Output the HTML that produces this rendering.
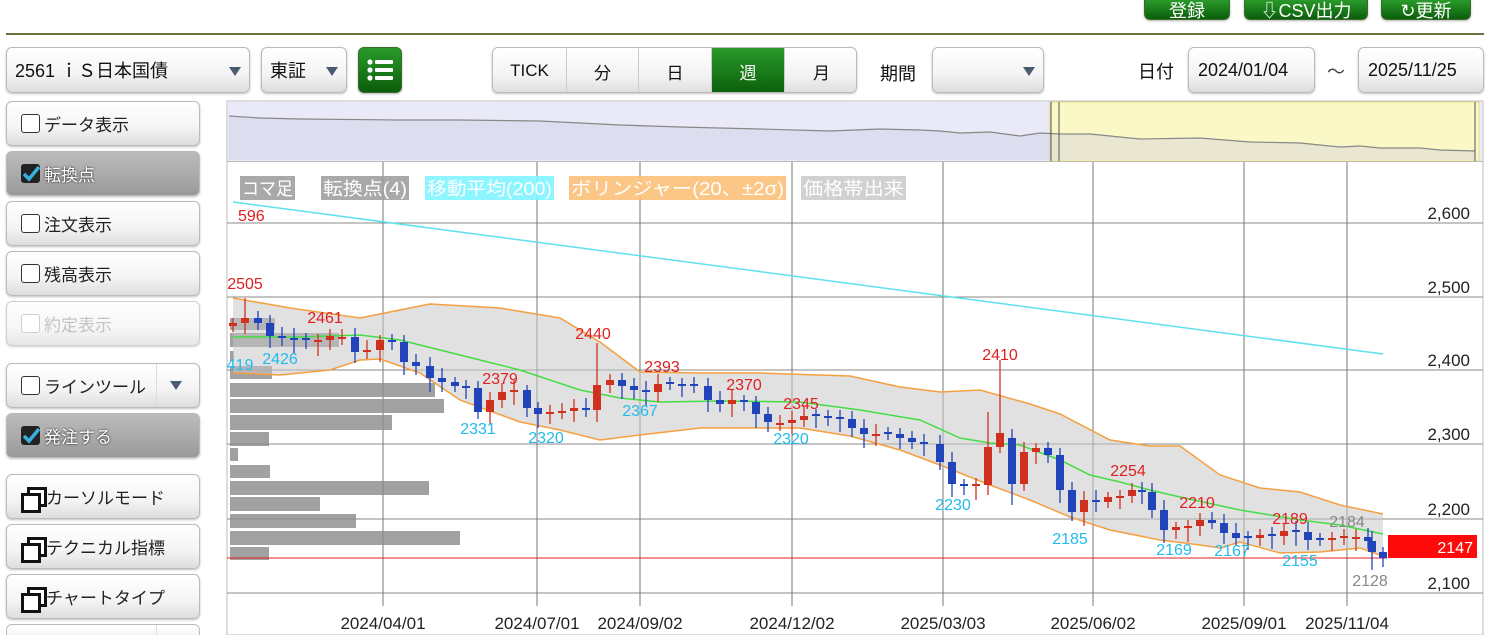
<!DOCTYPE html>
<html><head><meta charset="utf-8">
<style>
*{box-sizing:border-box;margin:0;padding:0}
html,body{width:1496px;height:635px;overflow:hidden}
body{background:#fff;font-family:"Liberation Sans","Noto Sans CJK JP",sans-serif;color:#111;position:relative}
.abs{position:absolute}
.btn{position:absolute;border:1px solid #bbb;border-radius:6px;background:linear-gradient(#fff,#f4f4f4 60%,#ddd);box-shadow:0 1px 2px rgba(0,0,0,.25);font-size:18px;display:flex;align-items:center}
.gbtn{position:absolute;border:1px solid #3a6a2a;border-radius:6px;background:linear-gradient(#2a9a2a,#0b5e0b);color:#fff;box-shadow:0 1px 2px rgba(0,0,0,.3);display:flex;align-items:center;justify-content:center;font-size:18px}
.side{left:6px;width:194px;height:45px;padding-left:14px;font-size:17px;color:#222}
.cb{width:19px;height:19px;border:1.5px solid #333;border-radius:3px;background:#fff;margin-right:4px;flex:none}
.cbc{width:19px;height:19px;border-radius:3px;background:#222;margin-right:4px;flex:none;position:relative}
.dark{background:linear-gradient(#bbb,#a8a8a8 60%,#999);color:#fff;text-shadow:0 0 2px #000}
.win{width:20px;height:20px;position:relative;margin-right:5px;flex:none}
.win:before{content:"";position:absolute;left:6px;top:0;width:14px;height:14px;border:3px solid #111;background:#fff}
.win:after{content:"";position:absolute;left:0;top:6px;width:14px;height:14px;border:3px solid #111;background:#fff}
.tri{width:0;height:0;border-left:6px solid transparent;border-right:6px solid transparent;border-top:9px solid #4a5a70;position:absolute}
.seg{position:absolute;top:47px;height:46px;display:flex;align-items:center;justify-content:center;font-size:17px;border-right:1px solid #ccc;background:linear-gradient(#fff,#f3f3f3 60%,#ddd)}
</style></head><body>
<div class="gbtn" style="left:1144px;top:0;width:86px;height:20px;border-top:none;border-radius:0 0 6px 6px">登録</div>
<div class="gbtn" style="left:1244px;top:0;width:124px;height:20px;border-top:none;border-radius:0 0 6px 6px">⇩CSV出力</div>
<div class="gbtn" style="left:1381px;top:0;width:90px;height:20px;border-top:none;border-radius:0 0 6px 6px">↻更新</div>
<div class="abs" style="left:6px;top:33px;width:1478px;height:2px;background:#6b7240"></div>

<div class="btn" style="left:6px;top:47px;width:244px;height:46px;padding-left:8px">2561 ｉＳ日本国債<div class="tri" style="left:222px;top:19px"></div></div>
<div class="btn" style="left:261px;top:47px;width:86px;height:46px;padding-left:8px">東証<div class="tri" style="left:64px;top:19px"></div></div>
<div class="gbtn" style="left:358px;top:47px;width:44px;height:46px">
<svg width="28" height="24" viewBox="0 0 28 24"><g fill="#fff"><circle cx="4" cy="4" r="2.6"/><circle cx="4" cy="12" r="2.6"/><circle cx="4" cy="20" r="2.6"/><rect x="9" y="2" width="18" height="4" rx="1"/><rect x="9" y="10" width="18" height="4" rx="1"/><rect x="9" y="18" width="18" height="4" rx="1"/></g></svg></div>

<div class="abs" style="left:492px;top:47px;width:365px;height:46px;border:1px solid #bbb;border-radius:6px;overflow:hidden;box-shadow:0 1px 2px rgba(0,0,0,.25)">
<div class="seg" style="left:0;top:0;width:74px">TICK</div>
<div class="seg" style="left:74px;top:0;width:72px">分</div>
<div class="seg" style="left:146px;top:0;width:73px">日</div>
<div class="seg" style="left:219px;top:0;width:73px;background:linear-gradient(#2a9a2a,#0b5e0b);color:#fff">週</div>
<div class="seg" style="left:292px;top:0;width:73px;border:none">月</div>
</div>
<div class="abs" style="left:880px;top:60px;font-size:18px">期間</div>
<div class="btn" style="left:932px;top:47px;width:112px;height:46px"><div class="tri" style="left:90px;top:19px"></div></div>
<div class="abs" style="left:1138px;top:58px;font-size:18px">日付</div>
<div class="btn" style="left:1188px;top:47px;width:127px;height:46px;padding-left:9px">2024/01/04</div>
<div class="abs" style="left:1327px;top:58px;font-size:18px;color:#444">～</div>
<div class="btn" style="left:1358px;top:47px;width:126px;height:46px;padding-left:9px">2025/11/25</div>

<div class="btn side" style="top:101px"><span class="cb"></span>データ表示</div>
<div class="btn side dark" style="top:151px"><span class="cbc"><svg width="19" height="19" style="position:absolute;left:0;top:0"><path d="M3 10 L8 15 L18 3" stroke="#3ab0e0" stroke-width="3.5" fill="none"/></svg></span>転換点</div>
<div class="btn side" style="top:201px"><span class="cb"></span>注文表示</div>
<div class="btn side" style="top:251px"><span class="cb"></span>残高表示</div>
<div class="btn side" style="top:301px;color:#aaa;opacity:.7"><span class="cb" style="border-color:#bbb"></span>約定表示</div>
<div class="btn side" style="top:363px"><span class="cb"></span>ラインツール<div class="abs" style="left:149px;top:0;width:1px;height:43px;background:#ddd"></div><div class="tri" style="left:163px;top:17px"></div></div>
<div class="btn side dark" style="top:413px"><span class="cbc"><svg width="19" height="19" style="position:absolute;left:0;top:0"><path d="M3 10 L8 15 L18 3" stroke="#3ab0e0" stroke-width="3.5" fill="none"/></svg></span>発注する</div>
<div class="btn side" style="top:474px"><span class="win"></span>カーソルモード</div>
<div class="btn side" style="top:524px"><span class="win"></span>テクニカル指標</div>
<div class="btn side" style="top:574px"><span class="win"></span>チャートタイプ</div>
<div class="abs" style="left:6px;top:624px;width:194px;height:11px;border:1px solid #bbb;border-bottom:none;border-radius:6px 6px 0 0;background:linear-gradient(#fff,#f6f6f6)"><div class="abs" style="left:149px;top:0;width:1px;height:10px;background:#ddd"></div></div>

<svg id="ch" class="abs" style="left:0;top:0" width="1496" height="635" font-family="Liberation Sans, sans-serif"></svg>
<script>
const s=document.getElementById('ch');let h='';
const L=227,R=1483;
h+=`<rect x="${L}" y="101" width="${R-L}" height="534" fill="#fff" stroke="#bbb"/>`;
h+=`<rect x="${L+1}" y="102" width="${R-L-2}" height="59" fill="#e9e9f7"/>`;
h+=`<rect x="1050" y="102" width="429" height="59" fill="#fbf8c8"/>`;
h+=`<rect x="1050" y="102" width="429" height="59" fill="none" stroke="#e8e08a"/>`;
let mp=[[229,116],[260,118],[300,119],[400,120],[460,120],[540,121],[620,125],[680,127],[760,129],[830,131],[880,129],[920,130],[940,131],[960,133],[990,132],[1020,136],[1040,133],[1060,134],[1090,134],[1110,136],[1140,139],[1200,138],[1250,142],[1300,143],[1340,147],[1360,146],[1380,148],[1420,148],[1440,150],[1475,151]];
h+=`<polygon points="${mp.map(p=>p.join(',')).join(' ')} 1475,160 229,160" fill="rgba(200,200,225,.35)"/>`;
h+=`<polyline points="${mp.map(p=>p.join(',')).join(' ')}" fill="none" stroke="#888" stroke-width="1.2"/>`;
h+=`<line x1="1051" y1="102" x2="1051" y2="161" stroke="#555"/><line x1="1059" y1="102" x2="1059" y2="161" stroke="#555"/><line x1="1475" y1="102" x2="1475" y2="161" stroke="#555"/>`;
h+=`<line x1="${L}" y1="161.5" x2="${R}" y2="161.5" stroke="#bbb"/>`;
[223,297,370,444,519,593].forEach((y,i)=>{h+=`<line x1="${L}" y1="${y}" x2="${R}" y2="${y}" stroke="#888"/>`;h+=`<text x="1470" y="${y-4}" text-anchor="end" font-size="17" fill="#222">${['2,600','2,500','2,400','2,300','2,200','2,100'][i]}</text>`});
const vx=[383,537,640,792,943,1093,1244,1347],vl=['2024/04/01','2024/07/01','2024/09/02','2024/12/02','2025/03/03','2025/06/02','2025/09/01','2025/11/04'];
vx.forEach((x,i)=>{h+=`<line x1="${x}" y1="162" x2="${x}" y2="606" stroke="#777"/>`;h+=`<text x="${x}" y="629" text-anchor="middle" font-size="17" fill="#222">${vl[i]}</text>`});
[[318,330,275],[333,347,339],[351,361,234],[366,379,272],[383,397,435],[399,413,444],[415,430,392],[432,446,269],[448,461,238],[465,478,270],[481,495,429],[497,511,320],[514,528,356],[531,545,460],[547,560,269]].forEach(b=>{h+=`<rect x="230" y="${b[0]}" width="${b[2]-230}" height="${b[1]-b[0]}" fill="rgba(140,140,140,.82)"/>`});
const up=[[233,298],[290,308],[360,318],[380,314],[430,304],[500,308],[560,318],[600,342],[640,372],[700,373],[760,373],[850,376],[900,387],[940,392],[980,390],[1030,404],[1060,414],[1110,440],[1150,446],[1180,446],[1220,475],[1260,488],[1300,492],[1340,505],[1383,514]];
const lo=[[233,373],[280,375],[330,370],[360,360],[380,359],[420,373],[460,400],[520,422],[560,430],[600,440],[640,435],[700,428],[760,428],[800,428],[850,436],[900,450],[940,465],[990,485],[1030,500],[1070,517],[1110,530],[1160,540],[1200,545],[1220,548],[1240,542],[1280,553],[1320,552],[1360,548],[1383,556]];
const P=a=>a.map(p=>p.join(',')).join(' ');
h+=`<polygon points="${P(up)} ${P(lo.slice().reverse())}" fill="rgba(200,200,200,.55)"/>`;
h+=`<polyline points="${P(up)}" fill="none" stroke="#f4a040" stroke-width="1.5"/><polyline points="${P(lo)}" fill="none" stroke="#f4a040" stroke-width="1.5"/>`;
const ma=[[233,337],[300,337],[360,335],[400,340],[460,355],[520,370],[580,390],[620,398],[660,402],[720,401],[800,402],[860,410],[920,420],[960,438],[990,443],[1020,445],[1060,460],[1090,475],[1120,482],[1150,490],[1180,497],[1240,510],[1300,520],[1340,525],[1383,534]];
h+=`<polyline points="${P(ma)}" fill="none" stroke="#44dd44" stroke-width="1.5"/>`;
h+=`<line x1="233" y1="202" x2="1383" y2="354" stroke="#5ee0ee" stroke-width="1.5"/>`;
h+=`<line x1="${L}" y1="558" x2="1387" y2="558" stroke="#e02020"/>`;
h+=`<rect x="1388" y="535" width="89" height="23" fill="#ff0a0a"/><text x="1473" y="553" text-anchor="end" font-size="16" fill="#fff">2147</text>`;
const c=[[233,323],[245,318],[258,323],[270,336],[282,338],[294,340],[306,340],[318,340],[330,336],[342,337],[355,352],[367,350],[380,340],[392,342],[404,362],[416,366],[430,378],[442,382],[455,386],[466,388],[478,412],[490,400],[502,392],[514,390],[527,408],[538,414],[550,412],[562,411],[574,408],[586,410],[597,385],[610,380],[622,386],[634,390],[646,392],[658,384],[670,384],[682,386],[694,386],[708,400],[720,404],[732,400],[744,402],[756,414],[768,422],[780,423],[792,420],[804,416],[816,416],[828,418],[840,419],[852,428],[864,434],[876,434],[888,434],[900,438],[912,442],[924,444],[940,462],[952,484],[964,486],[976,484],[988,447],[1000,433],[1012,484],[1024,452],[1036,448],[1048,455],[1060,490],[1072,512],[1084,500],[1096,502],[1108,497],[1120,496],[1132,490],[1142,492],[1152,510],[1164,530],[1176,527],[1188,526],[1200,520],[1212,523],[1224,533],[1236,538],[1248,538],[1260,535],[1272,536],[1284,531],[1296,532],[1308,540],[1320,540],[1332,538],[1344,536],[1356,537],[1368,541],[1372,552],[1383,558]];
let prev=326;
c.forEach((k,i)=>{let [x,cl]=k;let o=prev;
const O={988:485,1000:447,1012:438,597:410};if(O[x])o=O[x];
if(Math.abs(o-cl)<2){o=cl+(i%2?2:-2)}
const red=cl<o;const col=red?'#d03020':'#2244bb';const t=Math.min(o,cl),b=Math.max(o,cl);
let hi=t-5-(i*7%6),lw=b+6+(i*5%9);
if(x==245)hi=298;if(x==597)hi=343;if(x==1000)hi=360;if(x==988)hi=412;if(x==1012)lw=505;if(x==1372)lw=570;
h+=`<line x1="${x}" y1="${hi}" x2="${x}" y2="${lw}" stroke="${col}" stroke-width="1.3"/>`;
h+=`<rect x="${x-4}" y="${t}" width="8" height="${Math.max(2,b-t)}" fill="${col}"/>`;prev=cl;});
const lab=[[238,221,'596','#e02020','start'],[245,289,'2505','#e02020'],[325,323,'2461','#e02020'],[280,364,'2426','#22bbee'],[240,370,'419','#22bbee'],[593,339,'2440','#e02020'],[500,384,'2379','#e02020'],[478,434,'2331','#22bbee'],[546,443,'2320','#22bbee'],[662,372,'2393','#e02020'],[640,416,'2367','#22bbee'],[744,390,'2370','#e02020'],[801,409,'2345','#e02020'],[791,444,'2320','#22bbee'],[1000,360,'2410','#e02020'],[953,510,'2230','#22bbee'],[1070,544,'2185','#22bbee'],[1128,476,'2254','#e02020'],[1197,508,'2210','#e02020'],[1174,555,'2169','#22bbee'],[1232,556,'2167','#22bbee'],[1290,524,'2189','#e02020'],[1300,566,'2155','#22bbee'],[1347,527,'2184','#888'],[1370,586,'2128','#888']];
lab.forEach(l=>{h+=`<text x="${l[0]}" y="${l[1]}" text-anchor="${l[4]||'middle'}" font-size="16" fill="${l[3]}">${l[2]}</text>`});
[[240,55,'コマ足','#a0a0a0'],[321,88,'転換点(4)','#a0a0a0'],[425,129,'移動平均(200)','#80f4ff'],[569,217,'ボリンジャー(20、±2σ)','#fcc07a'],[801,105,'価格帯出来','#cccccc']].forEach(g=>{h+=`<rect x="${g[0]}" y="176" width="${g[1]}" height="24" fill="${g[3]}" opacity=".9"/><text x="${g[0]+g[1]/2}" y="195" text-anchor="middle" font-size="18" fill="#fff" font-family="Liberation Sans, Noto Sans CJK JP, sans-serif" textLength="${g[1]-4}" lengthAdjust="spacingAndGlyphs">${g[2]}</text>`});
s.innerHTML=h;
</script>
</body></html>
